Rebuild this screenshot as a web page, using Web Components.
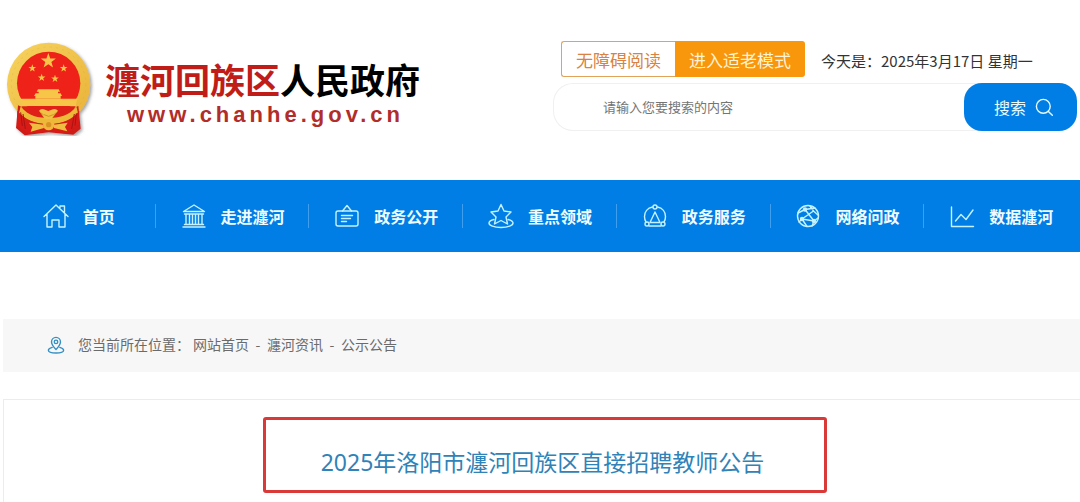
<!DOCTYPE html>
<html lang="zh-CN">
<head>
<meta charset="utf-8">
<meta name="viewport" content="width=device-width, initial-scale=1">
<title>瀍河回族区人民政府</title>
<style>
  :root {
    --blue: #007ee5;
    --orange: #f8960c;
    --title: #2f83b8;
    --grey: #6b6b6b;
  }
  body {
    margin: 0;
    background: #fff;
    color: #333;
    font-family: "Noto Sans CJK SC", "Liberation Sans", sans-serif;
    font-size: 14px;
  }
</style>
</head>
<body>
<gov-page>
  <gov-header slot="header">
    <gov-logo>
      <span slot="area">瀍河回族区</span>
      <span slot="org">人民政府</span>
      <span slot="url">www.chanhe.gov.cn</span>
    </gov-logo>
    <gov-tools slot="tools">今天是：2025年3月17日 星期一</gov-tools>
    <gov-search slot="tools" hint="请输入您要搜索的内容">搜索</gov-search>
  </gov-header>
  <gov-nav slot="nav">
    <gov-nav-item icon="home">首页</gov-nav-item>
    <gov-nav-item icon="hall">走进瀍河</gov-nav-item>
    <gov-nav-item icon="board">政务公开</gov-nav-item>
    <gov-nav-item icon="star">重点领域</gov-nav-item>
    <gov-nav-item icon="service">政务服务</gov-nav-item>
    <gov-nav-item icon="network">网络问政</gov-nav-item>
    <gov-nav-item icon="chart">数据瀍河</gov-nav-item>
  </gov-nav>
  <gov-crumbs>
    <gov-crumb>网站首页</gov-crumb>
    <gov-crumb>瀍河资讯</gov-crumb>
    <gov-crumb>公示公告</gov-crumb>
  </gov-crumbs>
  <gov-article>2025年洛阳市瀍河回族区直接招聘教师公告</gov-article>
</gov-page>

<script>
// line icons, all drawn on a 26x26 grid
const ICONS = {
  home: '<path d="M1 13.5 13 2l12 11.5M4 11v13h5v-7h7v7h6V11M17 4.500V3h4.500v6.500"/>',
  hall: '<path d="M2.500 8.500 13 2l10.500 6.500zM3.500 11h19M5 11v10M8.500 11v10M11.500 11v10M14.500 11v10M17.500 11v10M21 11v10M3.500 21.500h19M2 24h22"/>',
  board: '<rect x="2" y="8" width="22" height="15" rx="2"/><path d="M8.500 8 13 2.500 17.500 8M7.500 12.500h11M7.500 15.500h9M7.500 18.500h5"/>',
  star: '<path d="m13 1.500 3 6.500 7 1-5 5 1.500 7-6.500-3.500L6.500 21 8 14 3 9l7-1z"/><path d="M6 16.500c-3 .8-5 2-5 3.500 0 2.500 5 4.500 12 4.500s12-2 12-4.500c0-1.500-2-2.700-5-3.500"/>',
  service: '<path d="M10.500 4C5.500 5 2.500 9 2.500 13.500c0 2 .5 4 1.500 5.500M15.500 4c5 1 8 5 8 9.500 0 2-.5 4-1.500 5.500M7 23h12M8 19.500h10L13 9z"/><circle cx="13" cy="4" r="2"/><circle cx="5" cy="21" r="2"/><circle cx="21" cy="21" r="2"/>',
  network: '<circle cx="13" cy="13" r="10.500"/><path d="m3 10 7-3.500L20 5M10 6.500 19 18l4-3M19 18l-2 5M7 16l12 2M7 16l-3 3M7 16l5 7.500M7 16 18.500 8M15 3l3.500 5 4.500 4"/><circle cx="10" cy="6.500" r="1.500" fill="currentColor"/><circle cx="7" cy="16" r="1.500" fill="currentColor"/><circle cx="19" cy="18" r="1.500" fill="currentColor"/>',
  chart: '<path d="M2.500 4v19.500h22M6.500 18l5.500-6.500 5 5L24 7"/>',
  search: '<circle cx="12" cy="12" r="10"/><path d="m19 19 6 6"/>',
  place: '<path d="M13 19.500C9 15 6.500 12 6.500 8.500a6.500 6.500 0 0 1 13 0c0 3.500-2.500 6.500-6.500 11z"/><circle cx="13" cy="8.500" r="2.500"/><path d="M7.500 16.500C4 17.500 2 18.500 2 20.500 2 23 7 24.500 13 24.500s11-1.500 11-4c0-2-2-3-5.500-4"/>',
};

class GovIcon extends HTMLElement {
  constructor() {
    super();
    this.attachShadow({ mode: 'open' });
  }

  connectedCallback() {
    this.shadowRoot.innerHTML = `
      <style>
        :host { display: block; flex: none; width: 26px; height: 26px; }
        svg {
          display: block;
          width: 100%;
          height: 100%;
          fill: none;
          stroke: currentColor;
          stroke-width: var(--stroke, 1.4);
          stroke-linecap: round;
          stroke-linejoin: round;
        }
      </style>
      <svg viewBox="0 0 26 26" aria-hidden="true">${ICONS[this.getAttribute('name')]}</svg>
    `;
  }
}
customElements.define('gov-icon', GovIcon);

class GovEmblem extends HTMLElement {
  constructor() {
    super();
    this.attachShadow({ mode: 'open' });
    this.shadowRoot.innerHTML = `
      <style>
        :host { display: block; flex: none; width: 90px; height: 95px; }
        svg { display: block; width: 100%; height: 100%; }
      </style>
      <svg viewBox="15 35 270 285" aria-hidden="true">
        <defs>
          <linearGradient id="gold" x1="0" y1="0" x2="1" y2="1">
            <stop offset="0" stop-color="#f6d460"/>
            <stop offset="1" stop-color="#e9b137"/>
          </linearGradient>
          <filter id="shade" x="-10%" y="-10%" width="125%" height="125%">
            <feDropShadow dx="5" dy="5" stdDeviation="4" flood-color="#555" flood-opacity=".55"/>
          </filter>
          <path id="s" d="M0-10 2.400-3.200 9.500-3.100 3.800 1.200 5.900 8.100 0 4-5.900 8.100-3.800 1.200-9.500-3.100-2.400-3.200z"/>
        </defs>
        <g filter="url(#shade)">
          <circle cx="146" cy="165" r="125" fill="url(#gold)"/>
          <path d="M54 228 48 296l26 22 72-9 74 7 22-18-7-68-89 36z" fill="#cf1c18"/>
        </g>
        <circle cx="146" cy="162" r="95" fill="#ee2219"/>
        <circle cx="146" cy="165" r="112" fill="none" stroke="#d99a24" stroke-width="2" stroke-dasharray="5 9" pathLength="520" opacity=".35"/>
        <g fill="#f7c548">
          <use href="#s" transform="translate(145 95) scale(2.400)"/>
          <use href="#s" transform="translate(97 117) scale(1.200)"/>
          <use href="#s" transform="translate(191 117) scale(1.200)"/>
          <use href="#s" transform="translate(125 145) scale(1.200)"/>
          <use href="#s" transform="translate(165 148) scale(1.200)"/>
          <path d="M114 180h62l4 7h-6v5h8l4 8h-4v8h-76v-8h-4l5-8h9v-5h-6z"/>
          <path d="M60 208h172l-5 22H67z"/>
        </g>
        <path d="M65 231h162l-24 29-57 14-56-14z" fill="#de2019"/>
        <path d="M62 231c24 31 54 35 84 35s62-6 83-35l5 20c-20 26-54 33-88 33s-68-7-89-33z" fill="#edb938"/>
        <path d="M117 244q7-8 14-4l14 5 14-5q8-4 15 4l-10 13-10 13H135l-9-13z" fill="#f2c044"/>
        <path d="M52 244q34 40 94 40t92-40l-2 42-36 27-54-8-60 9-35-24z" fill="#d81b17"/>
        <circle cx="146" cy="286" r="17" fill="#efb83b"/>
        <circle cx="146" cy="286" r="8" fill="#d99324"/>
        <path d="m130 286-43-6 10 13-5 14 40-11zM162 286l41-6-8 13 7 13-40-10z" fill="#f1bd40"/>
        <path d="m69 254 7 45m-14-50 5 41M223 254l-8 45m14-47-4 37" stroke="#a81411" stroke-width="3" fill="none"/>
        <path d="m122 250 9 7m38-7-9 7m-28-1 14 5 14-5" stroke="#bb7c18" stroke-width="2" fill="none"/>
      </svg>
    `;
  }
}
customElements.define('gov-emblem', GovEmblem);

class GovLogo extends HTMLElement {
  constructor() {
    super();
    this.attachShadow({ mode: 'open' });
    this.shadowRoot.innerHTML = `
      <style>
        :host { display: block; flex: none; }
        a {
          display: flex;
          gap: 10px;
          color: #000;
          text-decoration: none;
          white-space: nowrap;
        }
        .words { padding-top: 16px; }
        .name { display: flex; font-size: 35px; line-height: 44px; font-weight: bold; }
        .area { color: #c01d18; }
        .url {
          padding-left: 22px;
          color: #b22d2a;
          font: bold 22px/28px "Liberation Sans", Arial, sans-serif;
          letter-spacing: 4px;
        }
      </style>
      <a href="#">
        <gov-emblem></gov-emblem>
        <div class="words">
          <div class="name"><span class="area"><slot name="area"></slot></span><slot name="org"></slot></div>
          <div class="url"><slot name="url"></slot></div>
        </div>
      </a>
    `;
  }
}
customElements.define('gov-logo', GovLogo);

class GovTools extends HTMLElement {
  constructor() {
    super();
    this.attachShadow({ mode: 'open' });
    this.shadowRoot.innerHTML = `
      <style>
        :host { display: flex; align-items: center; padding-left: 8px; white-space: nowrap; }
        button {
          box-sizing: border-box;
          height: 36px;
          padding: 0 14px;
          border: 1px solid #dfa35a;
          border-right: 0;
          border-radius: 3px 0 0 3px;
          background: #fff;
          color: #d98242;
          font: inherit;
          font-size: 17px;
          cursor: pointer;
        }
        button.old {
          border: 0;
          border-radius: 0 3px 3px 0;
          background: var(--orange);
          color: #fff3d6;
        }
        time { margin: 4px 0 0 16px; font-size: 15px; line-height: 20px; color: #333; }
      </style>
      <button type="button">无障碍阅读</button>
      <button type="button" class="old">进入适老模式</button>
      <time datetime="2025-03-17"><slot></slot></time>
    `;
  }
}
customElements.define('gov-tools', GovTools);

class GovSearch extends HTMLElement {
  constructor() {
    super();
    this.attachShadow({ mode: 'open' });
  }

  connectedCallback() {
    const hint = this.getAttribute('hint');
    this.shadowRoot.innerHTML = `
      <style>
        :host { display: block; margin-top: 6px; }
        form {
          display: flex;
          height: 48px;
          border-radius: 20px;
          box-shadow: inset 0 0 0 1px #f0f0f0;
        }
        input {
          flex: 1;
          min-width: 0;
          padding: 0 16px 2px 50px;
          border: 0;
          outline: 0;
          background: none;
          font: inherit;
          font-size: 13px;
        }
        input::placeholder { color: #757575; opacity: 1; }
        button {
          display: flex;
          align-items: center;
          gap: 9px;
          padding: 0 24px 0 30px;
          border: 0;
          border-radius: 18px;
          background: var(--blue);
          color: #e8fbff;
          font: inherit;
          font-size: 16px;
          cursor: pointer;
        }
        gov-icon { width: 18px; height: 18px; --stroke: 2; }
      </style>
      <form>
        <input type="search" aria-label="${hint}" placeholder="${hint}">
        <button type="submit"><slot></slot><gov-icon name="search"></gov-icon></button>
      </form>
    `;
  }
}
customElements.define('gov-search', GovSearch);

class GovHeader extends HTMLElement {
  constructor() {
    super();
    this.attachShadow({ mode: 'open' });
    this.shadowRoot.innerHTML = `
      <style>
        :host {
          display: flex;
          justify-content: space-between;
          gap: 24px;
          padding: 41px 3px 44px 5px;
        }
        .tools { flex: 0 1 524px; }
      </style>
      <slot></slot>
      <div class="tools"><slot name="tools"></slot></div>
    `;
  }
}
customElements.define('gov-header', GovHeader);

class GovNav extends HTMLElement {
  constructor() {
    super();
    this.attachShadow({ mode: 'open' });
    this.shadowRoot.innerHTML = `
      <style>
        :host { display: block; background: var(--blue); }
        nav { display: grid; grid-template-columns: repeat(7, 1fr); padding: 0 2px; }
      </style>
      <nav><slot></slot></nav>
    `;
  }
}
customElements.define('gov-nav', GovNav);

class GovNavItem extends HTMLElement {
  constructor() {
    super();
    this.attachShadow({ mode: 'open' });
  }

  connectedCallback() {
    this.shadowRoot.innerHTML = `
      <style>
        :host { display: flex; align-items: center; padding: 23px 0; }
        :host(:not(:last-child)) { background: linear-gradient(#3f9fee, #3f9fee) right center / 1px 24px no-repeat; }
        a {
          display: flex;
          flex: 1;
          align-items: center;
          justify-content: center;
          gap: 14px;
          color: #effcff;
          font-size: 16px;
          line-height: 26px;
          font-weight: bold;
          text-decoration: none;
          white-space: nowrap;
        }
        gov-icon { color: #c5f2ff; }
      </style>
      <a href="#"><gov-icon name="${this.getAttribute('icon')}"></gov-icon><slot></slot></a>
    `;
  }
}
customElements.define('gov-nav-item', GovNavItem);

class GovCrumbs extends HTMLElement {
  constructor() {
    super();
    this.attachShadow({ mode: 'open' });
    this.shadowRoot.innerHTML = `
      <style>
        :host { display: block; background: #f7f7f7; color: var(--grey); }
        nav { display: flex; align-items: center; padding: 15px 44px 17px; line-height: 21px; }
        gov-icon { width: 18px; height: 18px; margin-right: 13px; color: #348fc4; --stroke: 2; }
        .label { margin-right: 3px; }
      </style>
      <nav>
        <gov-icon name="place"></gov-icon>
        <span class="label">您当前所在位置：</span>
        <slot></slot>
      </nav>
    `;
  }
}
customElements.define('gov-crumbs', GovCrumbs);

class GovCrumb extends HTMLElement {
  constructor() {
    super();
    this.attachShadow({ mode: 'open' });
    this.shadowRoot.innerHTML = `
      <style>
        :host { display: flex; }
        :host(:not(:last-child))::after { content: "-"; width: 18px; text-align: center; }
        a { color: inherit; text-decoration: none; }
      </style>
      <a href="#"><slot></slot></a>
    `;
  }
}
customElements.define('gov-crumb', GovCrumb);

class GovArticle extends HTMLElement {
  constructor() {
    super();
    this.attachShadow({ mode: 'open' });
    this.shadowRoot.innerHTML = `
      <style>
        :host {
          display: flex;
          justify-content: center;
          align-items: flex-start;
          flex: 1;
          margin-top: 27px;
          padding: 17px 0 8px 6px;
          border: 1px solid #ececec;
          border-width: 1px 0 0 1px;
        }
        h1 {
          margin: 0;
          padding: 26px 60px 12px 55px;
          border: 3px solid #d93a38;
          border-radius: 3px;
          color: var(--title);
          font: 23px/32px "Noto Sans", "Noto Sans CJK SC", sans-serif;
        }
      </style>
      <h1><slot></slot></h1>
    `;
  }
}
customElements.define('gov-article', GovArticle);

class GovPage extends HTMLElement {
  constructor() {
    super();
    this.attachShadow({ mode: 'open' });
    this.shadowRoot.innerHTML = `
      <style>
        :host { display: flex; flex-direction: column; min-height: 100vh; }
        main { display: flex; flex-direction: column; flex: 1; padding: 67px 0 0 3px; }
      </style>
      <slot name="header"></slot>
      <slot name="nav"></slot>
      <main><slot></slot></main>
    `;
  }
}
customElements.define('gov-page', GovPage);
</script>
</body>
</html>
